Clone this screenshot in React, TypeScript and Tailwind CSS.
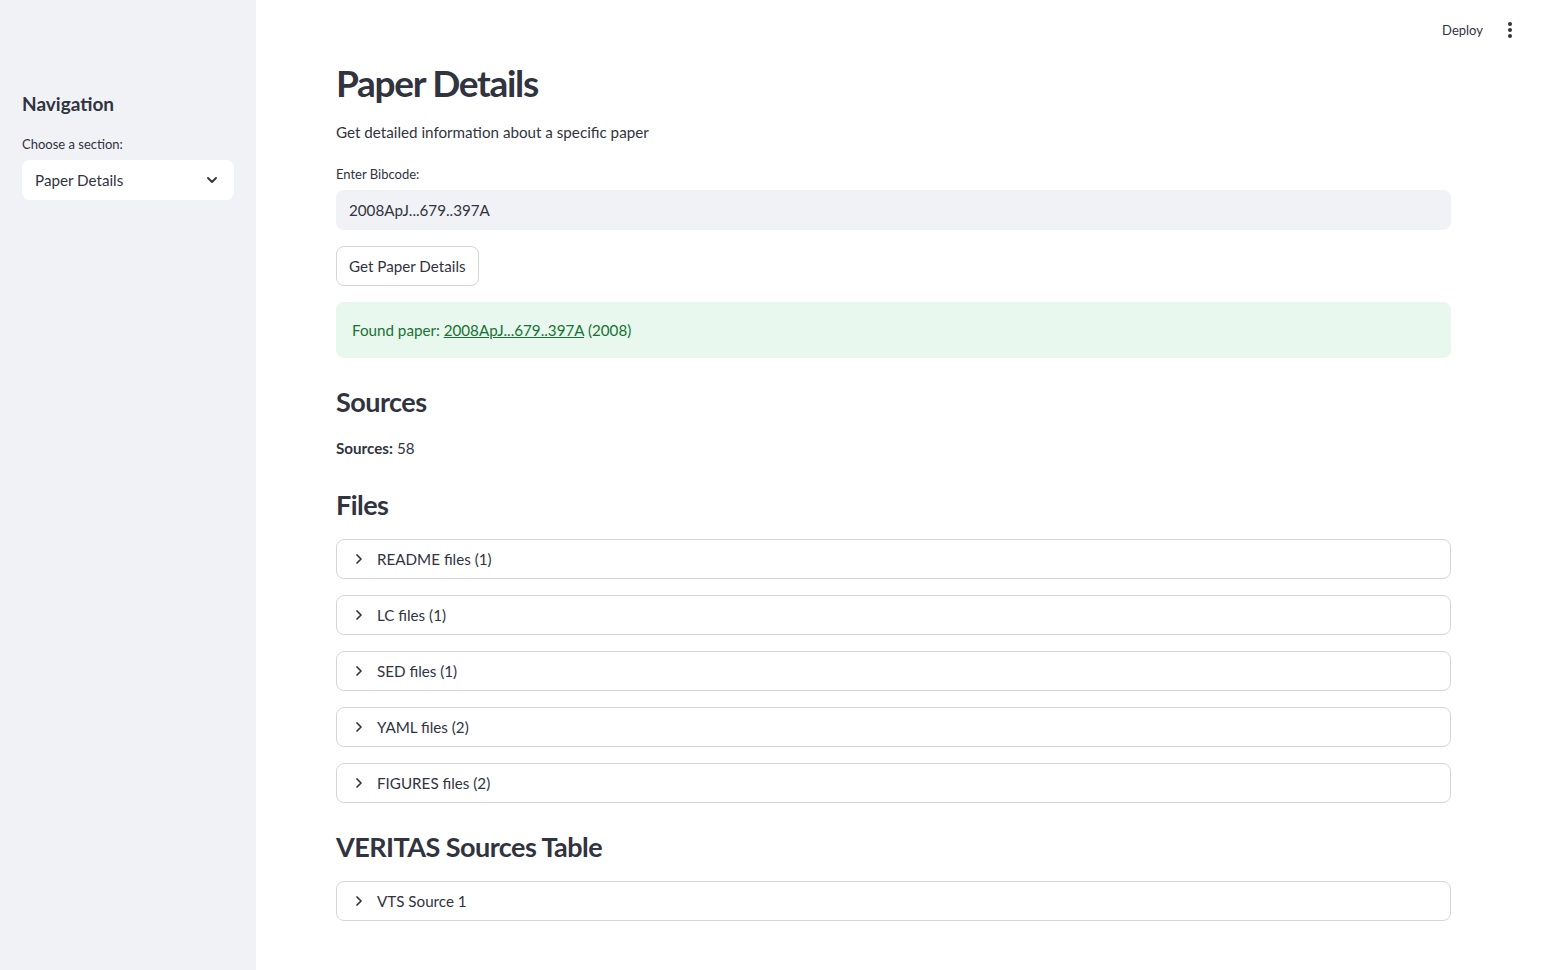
import React from "react"

const font = { fontFamily: '"Source Sans Pro", Lato, "Noto Sans", sans-serif' }

const Chevron = () => (
	<svg
		width="16"
		height="16"
		viewBox="0 0 24 24"
		fill="none"
		stroke="#31333f"
		strokeWidth="2.6"
		strokeLinecap="round"
		strokeLinejoin="round"
	>
		<path d="M9 6l6 6-6 6" />
	</svg>
)

const Expander = ({ label }: { label: string }) => (
	<div className="h-[40px] w-full rounded-lg border border-[#d6d6d9] flex items-center pl-[14px] gap-[10px] text-[15.2px] text-[#31333f]">
		<Chevron />
		<span>{label}</span>
	</div>
)

const files = [
	"README files (1)",
	"LC files (1)",
	"SED files (1)",
	"YAML files (2)",
	"FIGURES files (2)",
]

export default function App() {
	return (
		<div className="flex w-full min-h-[970px] bg-white text-[#31333f]" style={font}>
			{/* sidebar */}
			<aside className="w-[256px] shrink-0 bg-[#f0f2f6] px-[22px] pt-[88px]">
				<h2 className="h-[32px] flex items-center text-[19px] font-bold">Navigation</h2>
				<div className="mt-[15px] h-[20px] flex items-center text-[13px]">Choose a section:</div>
				<div className="mt-[5px] h-[40px] rounded-lg bg-white flex items-center justify-between pl-[13px] pr-[14px] text-[15.2px]">
					<span>Paper Details</span>
					<svg width="16" height="16" viewBox="0 0 24 24" fill="none" stroke="#31333f" strokeWidth="2.8" strokeLinecap="round" strokeLinejoin="round">
						<path d="M6 9l6 6 6-6" />
					</svg>
				</div>
			</aside>

			{/* main */}
			<main className="flex-1 flex flex-col">
				<header className="h-[57px] flex items-start justify-end pt-[19px] pr-[29px] gap-[24px]">
					<span className="text-[13px] leading-[22px]">Deploy</span>
					<svg width="6" height="22" viewBox="0 0 6 22" fill="#31333f">
						<circle cx="3" cy="5" r="2" />
						<circle cx="3" cy="11" r="2" />
						<circle cx="3" cy="17" r="2" />
					</svg>
				</header>

				<div className="pl-[80px] pr-[91px] flex flex-col">
					<h1 className="h-[52px] flex items-center text-[37px] font-bold tracking-[-0.035em]">Paper Details</h1>
					<p className="mt-[11px] h-[24px] flex items-center text-[15.2px]">Get detailed information about a specific paper</p>

					<label className="mt-[21px] h-[20px] flex items-center text-[13px]">Enter Bibcode:</label>
					<div className="mt-[5px] h-[40px] rounded-lg bg-[#f0f2f6] flex items-center pl-[13px] text-[15.2px]">
						2008ApJ...679..397A
					</div>

					<div className="mt-[16px]">
						<button className="h-[40px] px-[12px] rounded-lg border border-[#d6d6d9] bg-white text-[15.2px]">
							Get Paper Details
						</button>
					</div>

					<div className="mt-[16px] h-[56px] rounded-lg bg-[#e8f8ee] flex items-center pl-[16px] text-[15.2px] text-[#177233]">
						<span>
							Found paper: <span className="underline">2008ApJ...679..397A</span> (2008)
						</span>
					</div>

					<h3 className="mt-[24px] h-[40px] flex items-center text-[27px] font-bold tracking-[-0.02em]">Sources</h3>
					<p className="mt-[14px] h-[24px] flex items-center text-[15.2px]">
						<span className="font-bold mr-[4px]">Sources:</span>58
					</p>

					<h3 className="mt-[25px] h-[40px] flex items-center text-[27px] font-bold tracking-[-0.02em]">Files</h3>
					<div className="mt-[14px] flex flex-col gap-[16px]">
						{files.map((f) => (
							<Expander key={f} label={f} />
						))}
					</div>

					<h3 className="mt-[24px] h-[40px] flex items-center text-[27px] font-bold tracking-[-0.02em]">VERITAS Sources Table</h3>
					<div className="mt-[14px]">
						<Expander label="VTS Source 1" />
					</div>
				</div>
			</main>
		</div>
	)
}
